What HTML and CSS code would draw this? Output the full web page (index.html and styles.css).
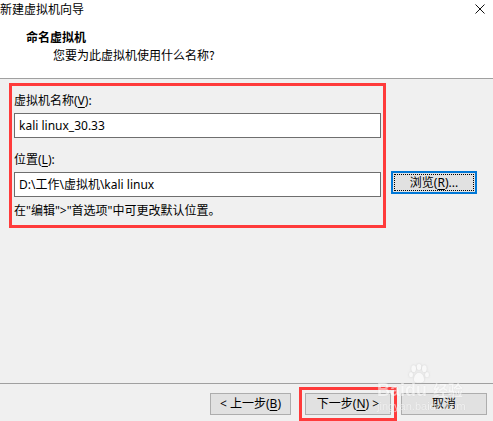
FILE: index.html
```html
<!DOCTYPE html>
<html lang="zh-CN">
<head>
	<meta charset="UTF-8">
	<title>新建虚拟机向导</title>
	<link rel="stylesheet" href="styles.css">
</head>
<body>
	<div class="wizard">
		<div class="header">
			<div class="titlebar">
				<span class="title">新建虚拟机向导</span>
				<span class="close">
					<svg width="10" height="10" viewBox="0 0 10 10"><path d="M0.5 0.5 L9.5 9.5 M9.5 0.5 L0.5 9.5" stroke="#111" stroke-width="1" fill="none"/></svg>
				</span>
			</div>
			<div class="heading">命名虚拟机</div>
			<div class="subheading">您要为此虚拟机使用什么名称?</div>
		</div>

		<div class="content">
			<div class="fields mark">
				<label class="label">虚拟机名称(<u>V</u>):</label>
				<div class="input">kali linux_30.33</div>
				<label class="label label-second">位置(<u>L</u>):</label>
				<div class="input">D:\工作\虚拟机\kali linux</div>
				<div class="note">在"编辑"&gt;"首选项"中可更改默认位置。</div>
			</div>
			<button class="btn btn-browse">浏览(<u>R</u>)...</button>
		</div>

		<div class="footer">
			<button class="btn btn-back">&lt; 上一步(<u>B</u>)</button>
			<div class="mark mark-next">
				<button class="btn btn-next">下一步(<u>N</u>) &gt;</button>
			</div>
			<button class="btn btn-cancel">取消</button>

			<!-- 水印 -->
			<div class="watermark" aria-hidden="true">
				<svg class="paw" width="24" height="20" viewBox="0 0 34 30">
					<ellipse cx="9" cy="7" rx="3.5" ry="5" />
					<ellipse cx="17" cy="4.5" rx="3.5" ry="4.5" />
					<ellipse cx="25" cy="7" rx="3.5" ry="5" />
					<ellipse cx="5" cy="16" rx="3" ry="4" />
					<ellipse cx="29" cy="16" rx="3" ry="4" />
					<path d="M17 13 C11 13 8 22 10 26 C12 29 22 29 24 26 C26 22 23 13 17 13 Z" />
				</svg>
				<div class="wm-brand"><span class="wm-bai">Bai</span><span class="wm-du">du</span><span class="wm-jy">经验</span></div>
				<div class="wm-url">jingyan.baidu.com</div>
			</div>
		</div>
	</div>
</body>
</html>
```

FILE: styles.css
```css
* {
    margin: 0;
    padding: 0;
    box-sizing: border-box;
}
body {
    width: 493px;
    height: 421px;
    overflow: hidden;
    background: #f0f0f0;
    font-family: "Noto Sans", "Noto Sans CJK SC", sans-serif;
    font-size: 12px;
    color: #000;
}
u {
    text-decoration: underline;
    text-underline-offset: 2px;
}
.wizard {
    display: flex;
    flex-direction: column;
    height: 421px;
}

/* 顶部白色区域 */
.header {
    height: 79px;
    background: #fff;
    border-bottom: 1px solid #a0a0a0;
}
.titlebar {
    display: flex;
    justify-content: space-between;
    align-items: flex-start;
    height: 18px;
    padding-top: 1px;
    line-height: 16px;
}
.title {
    font-family: "Noto Sans CJK SC", sans-serif;
}
.close {
    display: flex;
    margin: 3px 8px 0 0;
}
.heading {
    margin: 11px 0 0 26px;
    font-family: "Noto Sans CJK SC", sans-serif;
    font-weight: bold;
    line-height: 16px;
}
.subheading {
    margin: 2px 0 0 53px;
    font-family: "Noto Sans CJK SC", sans-serif;
    line-height: 16px;
}

/* 表单 */
.content {
    display: flex;
    align-items: flex-start;
    padding: 4px 0 0 9px;
}
.mark {
    border: 3px solid #ff3b3b;
}
.fields {
    width: 377px;
    padding: 7px 2px 6px 2px;
}
.label {
    display: block;
    line-height: 16px;
    height: 16px;
}
.label-second {
    margin-top: 14px;
}
.input {
    height: 25px;
    margin-top: 4px;
    padding: 0 4px;
    border: 1px solid #6e6e6e;
    background: #fff;
    line-height: 23px;
    white-space: nowrap;
}
.note {
    margin-top: 6px;
    line-height: 16px;
}

.btn {
    font-family: "Noto Sans", "Noto Sans CJK SC", sans-serif;
    font-size: 12px;
    color: #000;
    background: #e1e1e1;
    border: 1px solid #adadad;
    height: 22px;
    line-height: 18px;
}
.btn-browse {
    width: 86px;
    height: 23px;
    margin: 88px 0 0 5px;
    border: 2px solid #0078d7;
    outline: 1px dotted #000;
    outline-offset: -4px;
}

/* 底部按钮 */
.footer {
    position: relative;
    display: flex;
    align-items: flex-start;
    justify-content: flex-end;
    margin-top: auto;
    height: 38px;
    padding: 3px 6px 0 0;
    border-top: 1px solid #a0a0a0;
}
.btn-back {
    width: 81px;
    margin: 6px 8px 0 0;
}
.mark-next {
    padding: 3px;
}
.btn-next {
    width: 86px;
}
.btn-cancel {
    width: 86px;
    margin: 6px 0 0 4px;
}

.watermark {
    position: absolute;
    left: 377px;
    top: -20px;
    width: 100px;
    color: #fff;
    opacity: 0.55;
    text-shadow: 0 0 1px #b8b8b8;
    pointer-events: none;
}
.paw {
    display: block;
    margin-left: 30px;
    fill: #fff;
    filter: drop-shadow(0 0 1px #b8b8b8);
}
.wm-brand {
    margin-top: -3px;
    font-family: "Liberation Sans", sans-serif;
    font-size: 18px;
    font-weight: bold;
    line-height: 18px;
}
.wm-jy {
    font-family: "Noto Sans CJK SC", sans-serif;
    font-size: 15px;
    margin-left: 6px;
}
.wm-url {
    font-family: "Liberation Sans", sans-serif;
    font-size: 11px;
    line-height: 14px;
}
```
